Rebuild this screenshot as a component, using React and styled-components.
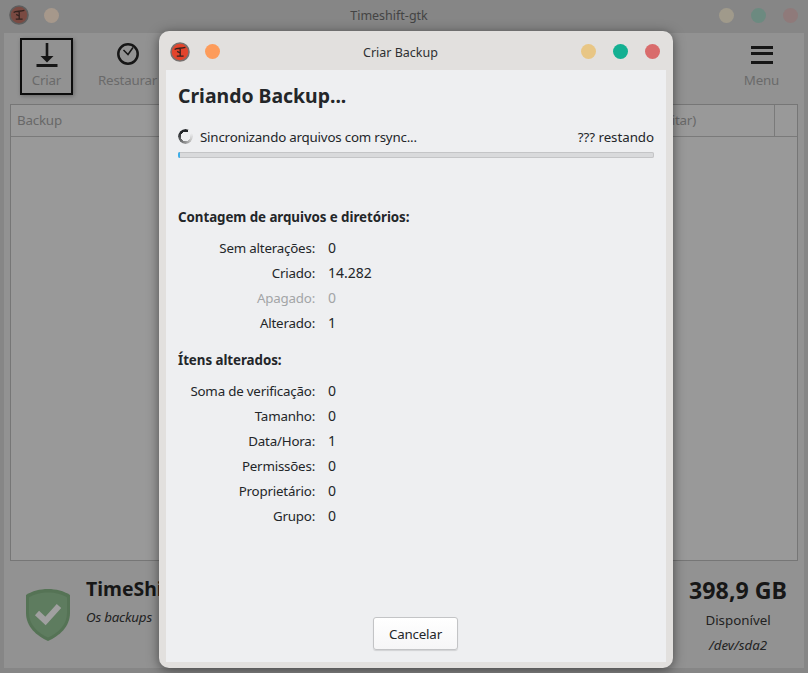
import React from "react";
import styled, { createGlobalStyle } from "styled-components";

const counts = [
  { label: "Sem alterações", value: "0" },
  { label: "Criado", value: "14.282" },
  { label: "Apagado", value: "0", muted: true },
  { label: "Alterado", value: "1" },
];

const changes = [
  { label: "Soma de verificação", value: "0" },
  { label: "Tamanho", value: "0" },
  { label: "Data/Hora", value: "1" },
  { label: "Permissões", value: "0" },
  { label: "Proprietário", value: "0" },
  { label: "Grupo", value: "0" },
];

const Logo = ({ dim }) => (
  <LogoSvg viewBox="0 0 20 20">
    <circle cx="10" cy="10" r="9" fill={dim ? "#7a4a42" : "#e2442c"} stroke={dim ? "#5e5e5e" : "#77706e"} strokeWidth="1.6" />
    <path d="M4.6 7.4 C7 5.4 11 7 15.4 5.4 M10.2 6.4 L10.2 13.6 M6.8 14.2 L13.6 14.2 M7.2 9.4 L10.2 11" fill="none" stroke="#33221f" strokeWidth="1.3" />
  </LogoSvg>
);

const App = () => {
  return (
    <>
      <GlobalStyle />
      <Desktop>
        <TitleBar>
          <DotGroup>
            <Logo dim />
            <Dot color="#a6988b" />
          </DotGroup>
          <TitleText dim>Timeshift-gtk</TitleText>
          <DotGroup>
            <Dot color="#a09a8b" />
            <Dot color="#6c8a80" />
            <Dot color="#8f7a7a" />
          </DotGroup>
        </TitleBar>

        <MainArea>
          <Toolbar>
            <ToolButton selected>
              <svg width="24" height="26" viewBox="0 0 24 26">
                <path d="M12 0 V17" fill="none" stroke="#161616" strokeWidth="2.6" />
                <path d="M5.5 13 H18.5 L12 19.5 Z" fill="#161616" />
                <rect x="1.500" y="21" width="21" height="3" fill="#161616" />
              </svg>
              <span>Criar</span>
            </ToolButton>
            <ToolButton>
              <svg width="24" height="26" viewBox="0 0 24 26">
                <circle cx="12" cy="11" r="9.7" fill="none" stroke="#161616" strokeWidth="2.5" />
                <path d="M7.5 7 L12 11.500 L17 4.500" fill="none" stroke="#161616" strokeWidth="1.500" />
              </svg>
              <span>Restaurar</span>
            </ToolButton>
            <MenuButton>
              <svg width="24" height="26" viewBox="0 0 24 26">
                <rect x="1" y="3" width="22" height="3" fill="#161616" />
                <rect x="1" y="9" width="22" height="3" fill="#161616" />
                <rect x="1" y="18" width="22" height="3" fill="#161616" />
              </svg>
              <span>Menu</span>
            </MenuButton>
          </Toolbar>

          <ListPanel>
            <ListHeader>
              <HeaderCell>Backup</HeaderCell>
              <HeaderCell>Comentários (clique para editar)</HeaderCell>
              <HeaderCell />
            </ListHeader>
          </ListPanel>

          <StatusBar>
            <svg width="44" height="52" viewBox="0 0 44 52">
              <path d="M22 0 C30 0 38 2 44 6 V24 C44 38 33 47 22 52 C11 47 0 38 0 24 V6 C6 2 14 0 22 0 Z" fill="#557355" />
              <path d="M22 3.500 C29 3.500 36 5 41 8.500 V24 C41 36 32 44 22 48.500 C12 44 3 36 3 24 V8.500 C8 5 15 3.500 22 3.500 Z" fill="#5e7c5f" />
              <path d="M11 24 L19.500 32 L33 17" fill="none" stroke="#a0a0a0" strokeWidth="6" />
            </svg>
            <StatusText>
              <StatusTitle>TimeShift</StatusTitle>
              <StatusNote>Os backups</StatusNote>
            </StatusText>
            <DiskInfo>
              <DiskSize>398,9 GB</DiskSize>
              <DiskLabel>Disponível</DiskLabel>
              <DiskDevice>/dev/sda2</DiskDevice>
            </DiskInfo>
          </StatusBar>
        </MainArea>

        <Dialog>
          <DialogBar>
            <DotGroup>
              <Logo />
              <Dot color="#fd9c5b" />
            </DotGroup>
            <TitleText>Criar Backup</TitleText>
            <DotGroup>
              <Dot color="#e8c685" />
              <Dot color="#14b092" />
              <Dot color="#d96c6c" />
            </DotGroup>
          </DialogBar>

          <DialogBody>
            <Heading>Criando Backup...</Heading>
            <ProgressRow>
              <Spinner />
              <ProgressText>Sincronizando arquivos com rsync...</ProgressText>
              <Remaining>??? restando</Remaining>
            </ProgressRow>
            <ProgressTrack>
              <ProgressFill style={{ width: "0.45%" }} />
            </ProgressTrack>

            <SectionTitle>Contagem de arquivos e diretórios:</SectionTitle>
            <StatGrid>
              {counts.map((row) => (
                <React.Fragment key={row.label}>
                  <StatLabel muted={row.muted}>{row.label}:</StatLabel>
                  <StatValue muted={row.muted}>{row.value}</StatValue>
                </React.Fragment>
              ))}
            </StatGrid>

            <ChangesTitle>Ítens alterados:</ChangesTitle>
            <StatGrid>
              {changes.map((row) => (
                <React.Fragment key={row.label}>
                  <StatLabel>{row.label}:</StatLabel>
                  <StatValue>{row.value}</StatValue>
                </React.Fragment>
              ))}
            </StatGrid>

            <DialogActions>
              <CancelButton>Cancelar</CancelButton>
            </DialogActions>
          </DialogBody>
        </Dialog>
      </Desktop>
    </>
  );
};

export default App;

const GlobalStyle = createGlobalStyle`
  html, body {
    margin: 0;
    padding: 0;
  }
  body {
    font-family: "Noto Sans", "Open Sans", sans-serif;
    font-size: 13.33px;
    letter-spacing: -0.2px;
    color: #232629;
  }
`;

const Desktop = styled.div`
  position: relative;
  width: 808px;
  height: 673px;
  overflow: hidden;
  background: #868686;
  display: flex;
  flex-direction: column;
`;

const TitleBar = styled.div`
  height: 33px;
  flex: none;
  padding: 0 10px 3px 9px;
  box-sizing: border-box;
  display: flex;
  align-items: center;
  justify-content: space-between;
`;

const DotGroup = styled.div`
  display: flex;
  align-items: center;
  gap: 17px;
`;

const LogoSvg = styled.svg`
  width: 20px;
  height: 20px;
  margin-right: -2px;
`;

const Dot = styled.span`
  width: 15px;
  height: 15px;
  border-radius: 50%;
  background: ${(props) => props.color};
`;

const TitleText = styled.span`
  font-size: 12.5px;
  letter-spacing: 0;
  padding-top: 1px;
  color: ${(props) => (props.dim ? "#444" : "#2e3032")};
`;

const MainArea = styled.div`
  flex: 1;
  margin: 0 4px 5px;
  background: #929292;
  display: flex;
  flex-direction: column;
`;

const Toolbar = styled.div`
  height: 71px;
  flex: none;
  padding: 5px 16px 0;
  box-sizing: border-box;
  display: flex;
  gap: 23px;
`;

const ToolButton = styled.div`
  height: 57px;
  min-width: 53px;
  padding: 3px 0 0;
  box-sizing: border-box;
  border: 2px solid ${(props) => (props.selected ? "#0c0c0c" : "transparent")};
  box-shadow: ${(props) => (props.selected ? "1px 1px 4px rgba(0,0,0,.3)" : "none")};
  display: flex;
  flex-direction: column;
  align-items: center;
  gap: 2px;
  line-height: 19px;
  color: #6a6a6a;
`;

const MenuButton = styled(ToolButton)`
  margin-left: auto;
`;

const ListPanel = styled.div`
  flex: 1;
  margin: 0 6px;
  border: 1px solid #767676;
  background: #999999;
`;

const ListHeader = styled.div`
  height: 32px;
  box-sizing: border-box;
  border-bottom: 1px solid #7a7a7a;
  display: grid;
  grid-template-columns: 483px 1fr 23px;
  align-items: stretch;
`;

const HeaderCell = styled.div`
  padding-left: 6px;
  line-height: 31px;
  color: #686868;
  white-space: nowrap;
  & + & {
    border-left: 1px solid #7a7a7a;
  }
`;

const StatusBar = styled.div`
  height: 107px;
  flex: none;
  padding: 0 17px 0 22px;
  box-sizing: border-box;
  display: flex;
  align-items: center;
  gap: 16px;
`;

const StatusText = styled.div`
  flex: 1;
  margin-top: -27px;
`;

const StatusTitle = styled.div`
  font-size: 19.4px;
  font-weight: 700;
  line-height: 27px;
  letter-spacing: 0;
  color: #171717;
`;

const StatusNote = styled.div`
  margin-top: 6px;
  font-style: italic;
  line-height: 19px;
  color: #222;
`;

const DiskInfo = styled.div`
  display: flex;
  flex-direction: column;
  align-items: center;
  padding-top: 1px;
`;

const DiskSize = styled.div`
  font-size: 23.2px;
  font-weight: 700;
  line-height: 30px;
  letter-spacing: 0;
  color: #171717;
`;

const DiskLabel = styled.div`
  margin-top: 6px;
  line-height: 19px;
  letter-spacing: 0;
  color: #222;
`;

const DiskDevice = styled.div`
  margin-top: 6px;
  font-style: italic;
  line-height: 19px;
  letter-spacing: 0;
  color: #222;
`;

const Dialog = styled.div`
  position: absolute;
  left: 159px;
  top: 31px;
  width: 514px;
  height: 637px;
  padding: 0 7px 6px;
  box-sizing: border-box;
  background: #e2e0de;
  border-radius: 10px;
  box-shadow: 0 2px 12px rgba(0, 0, 0, 0.5);
  display: flex;
  flex-direction: column;
`;

const DialogBar = styled.div`
  height: 39px;
  flex: none;
  padding: 2px 6px 0 4px;
  box-sizing: border-box;
  display: flex;
  align-items: center;
  justify-content: space-between;
`;

const DialogBody = styled.div`
  flex: 1;
  background: #eeeff1;
  padding: 12px;
  display: flex;
  flex-direction: column;
`;

const Heading = styled.div`
  font-size: 19.4px;
  font-weight: 700;
  line-height: 27px;
  letter-spacing: 0;
  color: #232629;
`;

const ProgressRow = styled.div`
  margin-top: 18px;
  height: 19px;
  display: flex;
  align-items: center;
  line-height: 19px;
`;

const Spinner = styled.div`
  width: 15px;
  height: 15px;
  margin: 0 7px 0 0;
  border-radius: 50%;
  background: conic-gradient(from 60deg, transparent 0deg, #c8c8c8 60deg, #232629 250deg, #232629 325deg, transparent 326deg);
  -webkit-mask: radial-gradient(circle, transparent 4.5px, #000 5px);
  mask: radial-gradient(circle, transparent 4.5px, #000 5px);
`;

const ProgressText = styled.span`
  flex: 1;
  padding-top: 2px;
`;

const Remaining = styled.span`
  padding-top: 2px;
  letter-spacing: -0.05px;
`;

const ProgressTrack = styled.div`
  margin-top: 6px;
  height: 6px;
  border-radius: 2px;
  background: #d9dadc;
  box-shadow: inset 0 0 0 1px #c4c5c7;
  overflow: hidden;
`;

const ProgressFill = styled.div`
  height: 100%;
  background: #3daee9;
`;

const SectionTitle = styled.div`
  margin-top: 50px;
  font-weight: 700;
  line-height: 19px;
  letter-spacing: -0.05px;
`;

const ChangesTitle = styled(SectionTitle)`
  margin-top: 16px;
`;

const StatGrid = styled.div`
  margin-top: 8px;
  display: grid;
  grid-template-columns: 137px 1fr;
  column-gap: 13px;
  grid-auto-rows: 25px;
  align-items: center;
  line-height: 19px;
`;

const StatLabel = styled.div`
  padding-top: 2px;
  text-align: right;
  white-space: nowrap;
  color: ${(props) => (props.muted ? "#a3a5a7" : "#232629")};
`;

const StatValue = styled.div`
  font-size: 14px;
  letter-spacing: 0;
  color: ${(props) => (props.muted ? "#a3a5a7" : "#232629")};
`;

const DialogActions = styled.div`
  margin-top: auto;
  padding-right: 1px;
  display: flex;
  justify-content: center;
`;

const CancelButton = styled.button`
  width: 85px;
  height: 33px;
  padding: 0;
  font-family: inherit;
  font-size: 13.33px;
  letter-spacing: -0.2px;
  color: #232629;
  background: linear-gradient(#ffffff, #f6f6f7);
  border: 1px solid #c3c4c6;
  border-radius: 3px;
  box-shadow: 0 1px 1px rgba(0, 0, 0, 0.12);
`;
